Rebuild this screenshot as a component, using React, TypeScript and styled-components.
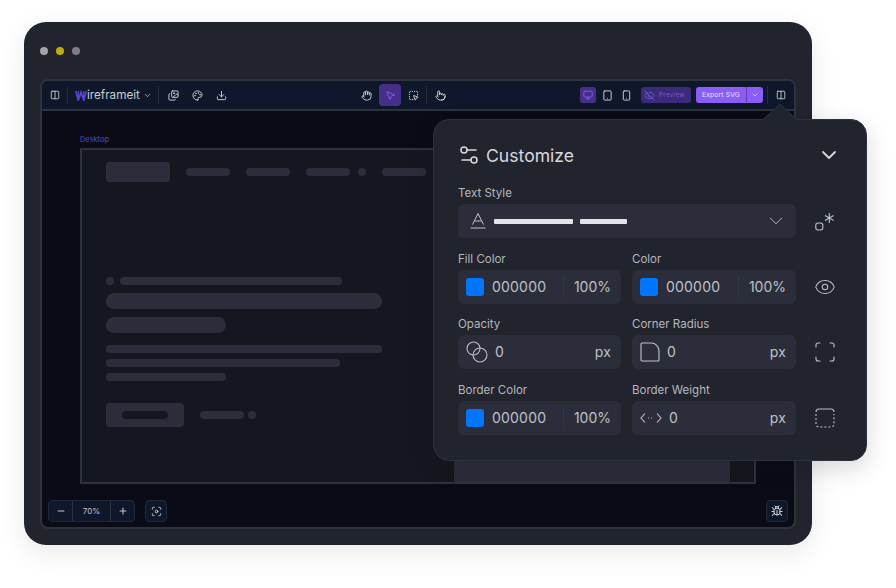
import React from 'react';
import styled, { createGlobalStyle } from 'styled-components';
import {
  Bug,
  ChevronDown,
  Columns2,
  Download,
  Eye,
  EyeOff,
  Focus,
  Hand,
  Images,
  Minus,
  Monitor,
  MousePointer2,
  Palette,
  Plus,
  Pointer,
  Scan,
  Settings2,
  Smartphone,
  SquareDashedMousePointer,
  Tablet,
} from 'lucide-react';

const GlobalStyle = createGlobalStyle`
  html, body {
    margin: 0;
    background: #ffffff;
    font-family: Inter, "Liberation Sans", sans-serif;
  }
`;

/* ── Device & window ── */

const Page = styled.div`
  position: relative;
  width: 896px;
  height: 588px;
  box-sizing: border-box;
  padding: 22px 84px 43px 24px;
  overflow: hidden;
`;

const Device = styled.div`
  height: 523px;
  box-sizing: border-box;
  padding: 22px 16px 16px;
  display: flex;
  flex-direction: column;
  background: #21242d;
  border-radius: 22px;
  box-shadow: 0 8px 28px rgba(20, 24, 32, 0.09);
`;

const Dots = styled.div`
  height: 13px;
  padding: 0 0 22px 0;
  display: flex;
  align-items: center;
  gap: 8px;
`;

const Dot = styled.span<{ $color: string }>`
  width: 8px;
  height: 8px;
  border-radius: 50%;
  background: ${({ $color }) => $color};
`;

const Window = styled.div`
  flex: 1;
  display: flex;
  flex-direction: column;
  min-height: 0;
  border: 2px solid #2e323d;
  border-radius: 8px;
  overflow: hidden;
  background: #0b0b16;
`;

/* ── Toolbar ── */

const Toolbar = styled.div`
  flex: none;
  height: 28px;
  padding: 0 0 0 7px;
  display: flex;
  align-items: center;
  background: #0f182a;
  border-bottom: 2px solid #2e323d;
  color: #d5d7dc;
`;

const ToolGroup = styled.div`
  flex: none;
  display: flex;
  align-items: center;
`;

const ToolSlot = styled.span<{ $w: number; $active?: boolean }>`
  width: ${({ $w }) => $w}px;
  height: ${({ $active }) => ($active ? 22 : 16)}px;
  flex: none;
  display: flex;
  align-items: center;
  justify-content: center;
  border-radius: 4px;
  background: ${({ $active }) => ($active ? '#452f89' : 'transparent')};
  color: ${({ $active }) => ($active ? '#8b5cf6' : 'inherit')};
`;

const DeviceSlot = styled(ToolSlot)`
  height: 16px;
  border-radius: 3px;
`;

const ToolDivider = styled.span<{ $gap?: number }>`
  width: 1px;
  height: 18px;
  flex: none;
  margin: 0 ${({ $gap }) => $gap ?? 0}px;
  background: #262c3a;
`;

const Brand = styled.div`
  width: 90px;
  flex: none;
  padding-left: 7px;
  box-sizing: border-box;
  display: flex;
  align-items: center;
  font-size: 11.7px;
  font-weight: 400;
  color: #c9cbd1;
`;

const BrandChevron = styled(ChevronDown)`
  margin-left: 3px;
`;

const ToolSpacer = styled.div<{ $w: number }>`
  width: ${({ $w }) => $w}px;
  flex: none;
`;

const PreviewButton = styled.div`
  width: 50px;
  height: 16px;
  flex: none;
  box-sizing: border-box;
  padding-left: 3px;
  margin-left: 7px;
  display: flex;
  align-items: center;
  gap: 4px;
  border-radius: 3px;
  background: #3b2b78;
  color: #7358d8;
  font-size: 6.5px;
  letter-spacing: 0.2px;
`;

const ExportButton = styled.div`
  width: 67px;
  height: 16px;
  flex: none;
  margin-left: 5px;
  display: flex;
  border-radius: 3px;
  overflow: hidden;
  background: #8b5cf6;
  color: #ede6ff;
  font-size: 6.7px;
  letter-spacing: 0.2px;
`;

const ExportLabel = styled.span`
  width: 50px;
  display: flex;
  align-items: center;
  justify-content: center;
  border-right: 1px solid #5f3fb0;
`;

const ExportCaret = styled.span`
  flex: 1;
  display: flex;
  align-items: center;
  justify-content: center;
`;

/* ── Canvas ── */

const Canvas = styled.div`
  flex: 1;
  min-height: 0;
  display: flex;
  flex-direction: column;
`;

const Stage = styled.div`
  flex: 1;
  min-height: 0;
  padding: 23px 38px 0;
  display: flex;
  flex-direction: column;
`;

const StageLabel = styled.div`
  height: 14px;
  font-size: 7.4px;
  line-height: 11px;
  color: #444ed8;
`;

const Frame = styled.div`
  flex: 1;
  min-height: 0;
  padding: 12px 24px 0;
  display: flex;
  flex-direction: column;
  background: #151720;
  border: 2px solid #2e323d;
`;

const SiteNav = styled.div`
  height: 20px;
  flex: none;
  display: flex;
  align-items: center;
`;

const Block = styled.div<{ $w: number; $h: number; $r?: number; $ml?: number; $mt?: number; $dark?: boolean }>`
  width: ${({ $w }) => $w}px;
  height: ${({ $h }) => $h}px;
  flex: none;
  margin-left: ${({ $ml }) => $ml ?? 0}px;
  margin-top: ${({ $mt }) => $mt ?? 0}px;
  border-radius: ${({ $r, $h }) => $r ?? $h / 2}px;
  background: ${({ $dark }) => ($dark ? '#151720' : '#2b2e3a')};
`;

const Hero = styled.div`
  flex: 1;
  min-height: 0;
  display: grid;
  grid-template-columns: 276px 276px;
  column-gap: 72px;
`;

const HeroCopy = styled.div`
  padding-top: 95px;
`;

const HeroMedia = styled.div`
  margin-top: 30px;
  background: #2b2e3a;
`;

const Inline = styled.div<{ $mt?: number }>`
  margin-top: ${({ $mt }) => $mt ?? 0}px;
  display: flex;
  align-items: center;
`;

const CtaButton = styled.div`
  width: 78px;
  height: 24px;
  border-radius: 4px;
  background: #2b2e3a;
  display: flex;
  align-items: center;
  justify-content: center;
`;

const CanvasFooter = styled.div`
  flex: none;
  height: 22px;
  padding: 16px 6px 5px;
  display: flex;
  align-items: center;
`;

const ZoomGroup = styled.div`
  height: 22px;
  display: flex;
  box-sizing: border-box;
  border: 1px solid #20293a;
  border-radius: 4px;
  background: #0f182a;
  color: #d5d7dc;
`;

const ZoomButton = styled.span<{ $w: number; $ruled?: boolean }>`
  width: ${({ $w }) => $w}px;
  box-sizing: border-box;
  display: flex;
  align-items: center;
  justify-content: center;
  border-left: ${({ $ruled }) => ($ruled ? '1px solid #2a3244' : '0')};
  font-size: 8px;
  color: #c3c6cd;
`;

const FloatButton = styled.span<{ $ml?: string }>`
  width: 22px;
  height: 22px;
  box-sizing: border-box;
  margin-left: ${({ $ml }) => $ml ?? '0'};
  display: flex;
  align-items: center;
  justify-content: center;
  border: 1px solid #20293a;
  border-radius: 4px;
  background: #0f182a;
  color: #d5d7dc;
`;

/* ── Customize panel ── */

const Panel = styled.div`
  position: absolute;
  left: 433px;
  top: 119px;
  width: 434px;
  height: 342px;
  box-sizing: border-box;
  padding: 15px 30px 0 24px;
  background: #21242d;
  border: 1px solid #2e323d;
  border-radius: 16px;
  box-shadow: 0 8px 24px rgba(10, 12, 18, 0.16);
  color: #c9cbd1;
`;

const PanelArrow = styled.svg`
  position: absolute;
  left: 328px;
  top: -17px;
`;

const PanelHeader = styled.div`
  height: 42px;
  box-sizing: border-box;
  padding-bottom: 2px;
  display: flex;
  align-items: center;
  color: #d8d9de;
`;

const HeaderIcon = styled(Settings2)`
  margin-left: -1px;
`;

const HeaderChevron = styled(ChevronDown)`
  margin-right: -5px;
`;

const PanelTitle = styled.h2`
  flex: 1;
  margin: 0 0 0 5px;
  font-size: 17.6px;
  font-weight: 400;
`;

const PanelRow = styled.div<{ $mt?: number }>`
  margin-top: ${({ $mt }) => $mt ?? 14}px;
  display: grid;
  grid-template-columns: 163px 164px 70px;
  column-gap: 11px;
  align-items: end;
`;

const WideRow = styled(PanelRow)`
  grid-template-columns: 338px 70px;
`;

const Field = styled.div`
  min-width: 0;
`;

const FieldLabel = styled.div`
  height: 18px;
  font-size: 11.5px;
  line-height: 14px;
  color: #b5b7be;
`;

const FieldBox = styled.div`
  height: 34px;
  box-sizing: border-box;
  padding: 0 10px 0 8px;
  display: flex;
  align-items: center;
  border-radius: 6px;
  background: #2b2e3a;
  font-size: 14px;
  line-height: 20px;
  letter-spacing: 0.2px;
  color: #bfc1c8;
`;

const Swatch = styled.span`
  width: 18px;
  height: 18px;
  flex: none;
  border-radius: 3px;
  background: #0075ff;
`;

const ColorValue = styled.span`
  flex: 1;
  margin-left: 8px;
`;

const PercentValue = styled.span`
  padding-left: 10px;
  letter-spacing: 0;
  border-left: 1px dotted #3c404c;
`;

const NumberValue = styled.span`
  flex: 1;
  margin-left: 7px;
`;

const TextStyleBar = styled.span<{ $w: number }>`
  width: ${({ $w }) => $w}px;
  height: 5px;
  margin-left: 7px;
  flex: none;
  border-radius: 1px;
  background: #e3e4e9;
`;

const SelectChevron = styled(ChevronDown)`
  margin-right: -1px;
`;

const SideIcon = styled.span`
  width: 24px;
  height: 34px;
  margin-left: 6px;
  display: flex;
  align-items: center;
  justify-content: center;
  color: #bfc1c8;

  & > svg {
    flex: none;
  }
`;

const Grow = styled.span`
  flex: 1;
`;

/* ── Drawn icons ── */

const LogoMark = () => (
  <svg width="12" height="11" viewBox="0 0 12 11" fill="none">
    <path d="M1 1l2.2 9L6 2.5 8.8 10 11 1" stroke="#5b3fc4" strokeWidth="2" />
    <path d="M3.4 1v8M8.6 1v8" stroke="#3f4fd0" strokeWidth="1" />
  </svg>
);

const FontIcon = () => (
  <svg width="18" height="18" viewBox="0 0 18 18" fill="none" stroke="currentColor" strokeWidth="1">
    <path d="M3.5 12.5L9 1.5l5.5 11M5.5 9h7M1.5 16h15" />
  </svg>
);

const StyleIcon = () => (
  <svg width="20" height="20" viewBox="0 0 20 20" fill="none" stroke="currentColor" strokeWidth="1.1">
    <rect x="0.8" y="12" width="7" height="7" rx="2.2" />
    <path d="M14.3 2v10M10 4.500l8.600 5M18.600 4.500l-8.600 5" />
  </svg>
);

const OpacityIcon = () => (
  <svg width="22" height="22" viewBox="0 0 22 22" fill="none" stroke="currentColor" strokeWidth="1.1">
    <circle cx="7.500" cy="7.500" r="6.500" />
    <circle cx="14" cy="14" r="7" />
  </svg>
);

const CornerIcon = () => (
  <svg width="20" height="20" viewBox="0 0 20 20" fill="none" stroke="currentColor" strokeWidth="1.1">
    <path d="M2 1h9c4.500 0 8 3.500 8 8v9a1 1 0 0 1-1 1H2a1 1 0 0 1-1-1V2a1 1 0 0 1 1-1z" />
  </svg>
);

const WeightIcon = () => (
  <svg width="22" height="12" viewBox="0 0 22 12" fill="none" stroke="currentColor" strokeWidth="1.1">
    <path d="M5 1.500L1 6l4 4.500M17 1.500L21 6l-4 4.500" />
    <path d="M8 6h6" strokeDasharray="1 2" />
  </svg>
);

const BorderIcon = () => (
  <svg width="20" height="20" viewBox="0 0 20 20" fill="none" stroke="currentColor" strokeWidth="1.1">
    <path d="M1 4a3 3 0 0 1 3-3h12a3 3 0 0 1 3 3" />
    <path d="M1 6v10a3 3 0 0 0 3 3h12a3 3 0 0 0 3-3V6" strokeDasharray="2 2" />
  </svg>
);

/* ── Field helpers ── */

const ColorField: React.FC<{ label: string }> = ({ label }) => (
  <Field>
    <FieldLabel>{label}</FieldLabel>
    <FieldBox>
      <Swatch />
      <ColorValue>000000</ColorValue>
      <PercentValue>100%</PercentValue>
    </FieldBox>
  </Field>
);

const NumberField: React.FC<{ label: string; icon: React.ReactNode }> = ({ label, icon }) => (
  <Field>
    <FieldLabel>{label}</FieldLabel>
    <FieldBox>
      {icon}
      <NumberValue>0</NumberValue>
      <span>px</span>
    </FieldBox>
  </Field>
);

const App: React.FC = () => (
  <Page>
    <GlobalStyle />
    <Device>
      <Dots>
        <Dot $color="#a3a4ac" />
        <Dot $color="#c0ac0a" />
        <Dot $color="#7d7f88" />
      </Dots>
      <Window>
        <Toolbar>
          <ToolSlot $w={12}><Columns2 size={10} /></ToolSlot>
          <ToolSpacer $w={6} />
          <ToolDivider />
          <Brand>
            <LogoMark />
            <span>ireframeit</span>
            <BrandChevron size={9} />
          </Brand>
          <ToolDivider />
          <ToolSpacer $w={5} />
          <ToolGroup>
            <ToolSlot $w={18}><Images size={11} /></ToolSlot>
            <ToolSpacer $w={6} />
            <ToolSlot $w={18}><Palette size={11} /></ToolSlot>
            <ToolSpacer $w={6} />
            <ToolSlot $w={18}><Download size={11} /></ToolSlot>
          </ToolGroup>
          <ToolSpacer $w={123} />
          <ToolGroup>
            <ToolSlot $w={26}><Hand size={11} /></ToolSlot>
            <ToolSlot $w={22} $active><MousePointer2 size={11} /></ToolSlot>
            <ToolSlot $w={24}><SquareDashedMousePointer size={11} /></ToolSlot>
            <ToolDivider $gap={1} />
            <ToolSlot $w={24}><Pointer size={11} /></ToolSlot>
          </ToolGroup>
          <ToolSpacer $w={128} />
          <ToolGroup>
            <DeviceSlot $w={16} $active><Monitor size={10} /></DeviceSlot>
            <DeviceSlot $w={22}><Tablet size={11} /></DeviceSlot>
            <DeviceSlot $w={16}><Smartphone size={11} /></DeviceSlot>
          </ToolGroup>
          <PreviewButton>
            <EyeOff size={11} />
            <span>Preview</span>
          </PreviewButton>
          <ExportButton>
            <ExportLabel>Export SVG</ExportLabel>
            <ExportCaret><ChevronDown size={8} /></ExportCaret>
          </ExportButton>
          <ToolSpacer $w={4} />
          <ToolDivider />
          <ToolSlot $w={25}><Columns2 size={10} /></ToolSlot>
        </Toolbar>
        <Canvas>
          <Stage>
            <StageLabel>Desktop</StageLabel>
            <Frame>
              <SiteNav>
                <Block $w={64} $h={20} $r={3} />
                <Block $w={44} $h={8} $ml={16} />
                <Block $w={44} $h={8} $ml={16} />
                <Block $w={44} $h={8} $ml={16} />
                <Block $w={8} $h={8} $ml={8} />
                <Block $w={44} $h={8} $ml={16} />
              </SiteNav>
              <Hero>
                <HeroCopy>
                  <Inline>
                    <Block $w={8} $h={8} />
                    <Block $w={222} $h={8} $ml={6} />
                  </Inline>
                  <Block $w={276} $h={16} $mt={8} />
                  <Block $w={120} $h={16} $mt={8} />
                  <Block $w={276} $h={8} $mt={12} />
                  <Block $w={234} $h={8} $mt={6} />
                  <Block $w={120} $h={8} $mt={6} />
                  <Inline $mt={22}>
                    <CtaButton><Block $w={46} $h={8} $dark /></CtaButton>
                    <Block $w={44} $h={8} $ml={16} />
                    <Block $w={8} $h={8} $ml={4} />
                  </Inline>
                </HeroCopy>
                <HeroMedia />
              </Hero>
            </Frame>
          </Stage>
          <CanvasFooter>
            <ZoomGroup>
              <ZoomButton $w={23}><Minus size={10} strokeWidth={2.5} /></ZoomButton>
              <ZoomButton $w={38} $ruled>70%</ZoomButton>
              <ZoomButton $w={24} $ruled><Plus size={10} strokeWidth={2.5} /></ZoomButton>
            </ZoomGroup>
            <FloatButton $ml="10px"><Focus size={11} /></FloatButton>
            <FloatButton $ml="auto"><Bug size={12} /></FloatButton>
          </CanvasFooter>
        </Canvas>
      </Window>
    </Device>

    <Panel>
      <PanelArrow width="36" height="18" viewBox="0 0 36 18">
        <path d="M0 17.500L18 1l18 16.500" fill="#21242d" stroke="#2e323d" />
      </PanelArrow>
      <PanelHeader>
        <HeaderIcon size={24} strokeWidth={1.5} />
        <PanelTitle>Customize</PanelTitle>
        <HeaderChevron size={24} strokeWidth={1.8} />
      </PanelHeader>
      <WideRow $mt={9}>
        <Field>
          <FieldLabel>Text Style</FieldLabel>
          <FieldBox>
            <ToolSpacer $w={3} />
            <FontIcon />
            <TextStyleBar $w={79} />
            <TextStyleBar $w={47} />
            <Grow />
            <SelectChevron size={22} strokeWidth={1} />
          </FieldBox>
        </Field>
        <SideIcon><StyleIcon /></SideIcon>
      </WideRow>
      <PanelRow>
        <ColorField label="Fill Color" />
        <ColorField label="Color" />
        <SideIcon><Eye size={22} strokeWidth={1.1} /></SideIcon>
      </PanelRow>
      <PanelRow $mt={13}>
        <NumberField label="Opacity" icon={<OpacityIcon />} />
        <NumberField label="Corner Radius" icon={<CornerIcon />} />
        <SideIcon><Scan size={24} strokeWidth={1.1} /></SideIcon>
      </PanelRow>
      <PanelRow>
        <ColorField label="Border Color" />
        <NumberField label="Border Weight" icon={<WeightIcon />} />
        <SideIcon><BorderIcon /></SideIcon>
      </PanelRow>
    </Panel>
  </Page>
);

export default App;
